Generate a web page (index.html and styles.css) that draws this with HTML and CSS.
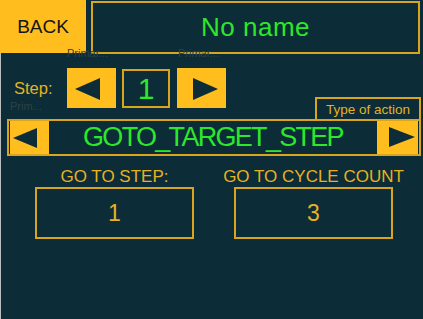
FILE: index.html
```html
<!DOCTYPE html>
<html lang="en">
<head>
    <meta charset="UTF-8">
    <meta name="viewport" content="width=device-width, initial-scale=1.0">
    <title>Step editor</title>
    <link rel="stylesheet" href="styles.css">
</head>
<body>
    <div class="screen">
        <div class="top-bar">
            <button class="back-btn">BACK</button>
            <div class="name-box">No name</div>
        </div>

        <div class="step-row">
            <span class="step-label">Step:</span>
            <button class="arrow-btn step-arrow">
                <svg viewBox="0 0 49 40" width="49" height="40"><polygon points="8,21 33,10 33,32"/></svg>
            </button>
            <div class="step-num">1</div>
            <button class="arrow-btn step-arrow">
                <svg viewBox="0 0 49 40" width="49" height="40"><polygon points="41,21 16,10 16,32"/></svg>
            </button>
        </div>

        <div class="action-caption">Type of action</div>
        <div class="action-row">
            <button class="arrow-btn action-left">
                <svg viewBox="0 0 39 33" width="39" height="33"><polygon points="3,17 27,7 27,27"/></svg>
            </button>
            <div class="action-name">GOTO_TARGET_STEP</div>
            <button class="arrow-btn action-right">
                <svg viewBox="0 0 41 33" width="41" height="33"><polygon points="38,16 12,6 12,26"/></svg>
            </button>
        </div>

        <div class="params">
            <div class="param">
                <div class="param-label">GO TO STEP:</div>
                <div class="param-box">1</div>
            </div>
            <div class="param">
                <div class="param-label">GO TO CYCLE COUNT</div>
                <div class="param-box">3</div>
            </div>
        </div>

        <!-- faint placeholder labels behind the controls -->
        <span class="ghost ghost-1">Primar...</span>
        <span class="ghost ghost-2">Primar...</span>
        <span class="ghost ghost-3">Prim...</span>
    </div>
</body>
</html>
```

FILE: styles.css
```css
html, body {
    margin: 0;
    padding: 0;
    background-color: #0c2c37;
}
body {
    font-family: "Liberation Sans", Arial, sans-serif;
    width: 423px;
    height: 319px;
    overflow: hidden;
}
.screen {
    position: relative;
    height: 319px;
    border-left: 1px solid #b9bdbf;
    display: flex;
    flex-direction: column;
}
button {
    font-family: inherit;
    border: none;
    padding: 0;
    margin: 0;
    cursor: pointer;
}
.top-bar {
    display: flex;
    gap: 5px;
    margin-left: -1px;
    height: 54px;
}
.back-btn {
    width: 86px;
    height: 53px;
    background-color: #ffbe1e;
    color: #141414;
    font-size: 19px;
}
.name-box {
    box-sizing: border-box;
    width: 329px;
    height: 53px;
    margin-top: 1px;
    border: 2px solid #d9a51f;
    color: #2de82a;
    font-size: 26px;
    letter-spacing: 0.5px;
    display: flex;
    align-items: center;
    justify-content: center;
}
.step-row {
    display: flex;
    align-items: center;
    margin-top: 14px;
    padding-left: 13px;
    height: 40px;
}
.step-label {
    width: 53px;
    color: #e8b21f;
    font-size: 16.5px;
}
.arrow-btn {
    background-color: #ffbe1e;
    display: block;
}
.arrow-btn svg {
    display: block;
    fill: #0c2c37;
}
.step-arrow {
    width: 49px;
    height: 40px;
}
.step-num {
    box-sizing: border-box;
    width: 48px;
    height: 39px;
    margin: 1px 7px 0 6px;
    border: 2px solid #d9a51f;
    color: #2de82a;
    font-size: 30px;
    display: flex;
    align-items: center;
    justify-content: center;
}
.action-caption {
    box-sizing: border-box;
    align-self: flex-end;
    margin: -11px 2px 0 0;
    width: 106px;
    height: 22px;
    border: 2px solid #d9a51f;
    border-bottom: none;
    color: #e8b21f;
    font-size: 13.5px;
    display: flex;
    align-items: center;
    justify-content: center;
}
.action-row {
    box-sizing: border-box;
    display: flex;
    align-items: center;
    margin: 0 2px 0 6px;
    height: 37px;
    padding: 0 1px;
    border: 2px solid #d9a51f;
}
.action-left {
    width: 39px;
    height: 33px;
}
.action-right {
    width: 41px;
    height: 33px;
}
.action-name {
    flex: 1;
    text-align: center;
    color: #2de82a;
    font-size: 27px;
    letter-spacing: -1.7px;
    line-height: 33px;
}
.params {
    display: flex;
    margin-top: 11px;
    padding-left: 34px;
    gap: 40px;
}
.param {
    display: flex;
    flex-direction: column;
    align-items: center;
    width: 159px;
}
.param-label {
    color: #e8b21f;
    font-size: 17px;
    line-height: 20px;
    white-space: nowrap;
}
.param-box {
    box-sizing: border-box;
    width: 159px;
    height: 52px;
    border: 2px solid #d9a51f;
    color: #e8b21f;
    font-size: 23px;
    display: flex;
    align-items: center;
    justify-content: center;
}
.ghost {
    position: absolute;
    color: #2e424a;
    font-size: 11px;
}
.ghost-1 {
    left: 66px;
    top: 47px;
}
.ghost-2 {
    left: 177px;
    top: 47px;
}
.ghost-3 {
    left: 9px;
    top: 100px;
}
```
